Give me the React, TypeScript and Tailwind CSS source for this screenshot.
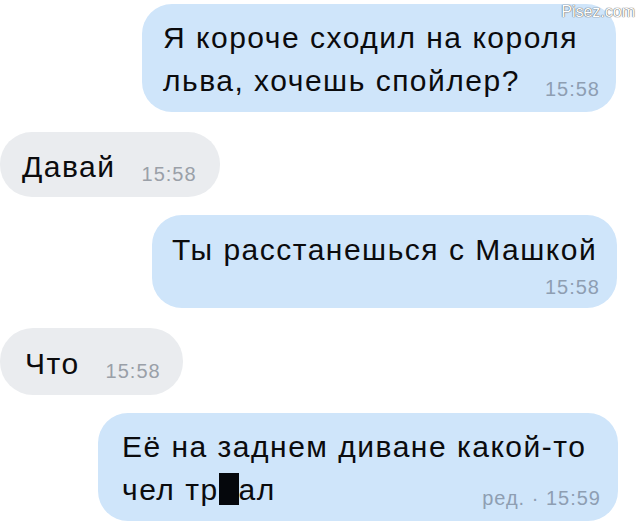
import React from 'react';

const Time = ({ children, className = '' }: { children: React.ReactNode; className?: string }) => (
    <span className={`text-[20px] leading-none tracking-[1px] text-[#8e9eb2] ${className}`}>{children}</span>
);

const App = () => {
    return (
        <div className="relative h-[529px] w-[640px] overflow-hidden bg-white font-['Liberation_Sans',Arial,sans-serif] text-[30px] leading-[43px] tracking-[1.5px] text-[#0b0b0d]">
            <span className="absolute right-[5px] top-[4px] text-[16px] leading-none tracking-normal text-white [text-shadow:0_0_1px_#555,0_0_1px_#555]">
                Pisez.com
            </span>

            <div className="flex flex-col pt-[4px]">
                {/* 1 */}
                <div className="ml-[142px] w-[474px] rounded-[30px] bg-[#cfe5fa] pb-[10px] pl-[21px] pr-[16px] pt-[12px]">
                    <p>Я короче сходил на короля</p>
                    <div className="flex items-baseline">
                        <span>льва, хочешь спойлер?</span>
                        <Time className="ml-auto translate-y-[5px]">15:58</Time>
                    </div>
                </div>

                {/* 2 */}
                <div className="mt-[20px] flex h-[65px] w-[220px] items-center gap-[26px] rounded-[32px] bg-[#eaecef] pl-[22px] pt-[4px]">
                    <span>Давай</span>
                    <Time className="mt-[14px] text-[#9aa0a8]">15:58</Time>
                </div>

                {/* 3 */}
                <div className="ml-[152px] mt-[18px] w-[465px] rounded-[30px] bg-[#cfe5fa] pb-[11px] pl-[20px] pr-[17px] pt-[13px]">
                    <p>Ты расстанешься с Машкой</p>
                    <div className="mt-[6px] flex justify-end">
                        <Time>15:58</Time>
                    </div>
                </div>

                {/* 4 */}
                <div className="mt-[20px] flex h-[67px] w-[183px] items-center gap-[26px] rounded-[33px] bg-[#eaecef] pl-[25px] pt-[4px]">
                    <span>Что</span>
                    <Time className="mt-[14px] text-[#9aa0a8]">15:58</Time>
                </div>

                {/* 5 */}
                <div className="ml-[98px] mt-[18px] w-[520px] rounded-[30px] bg-[#cfe5fa] pb-[10px] pl-[24px] pr-[17px] pt-[12px]">
                    <p>Её на заднем диване какой-то</p>
                    <div className="flex items-baseline">
                        <span>
                            чел тр<span className="inline-block h-[32px] w-[20px] translate-y-[5px] bg-[#05070c]" />ал
                        </span>
                        <Time className="ml-auto translate-y-[5px]">ред. · 15:59</Time>
                    </div>
                </div>
            </div>
        </div>
    );
};

export default App;
